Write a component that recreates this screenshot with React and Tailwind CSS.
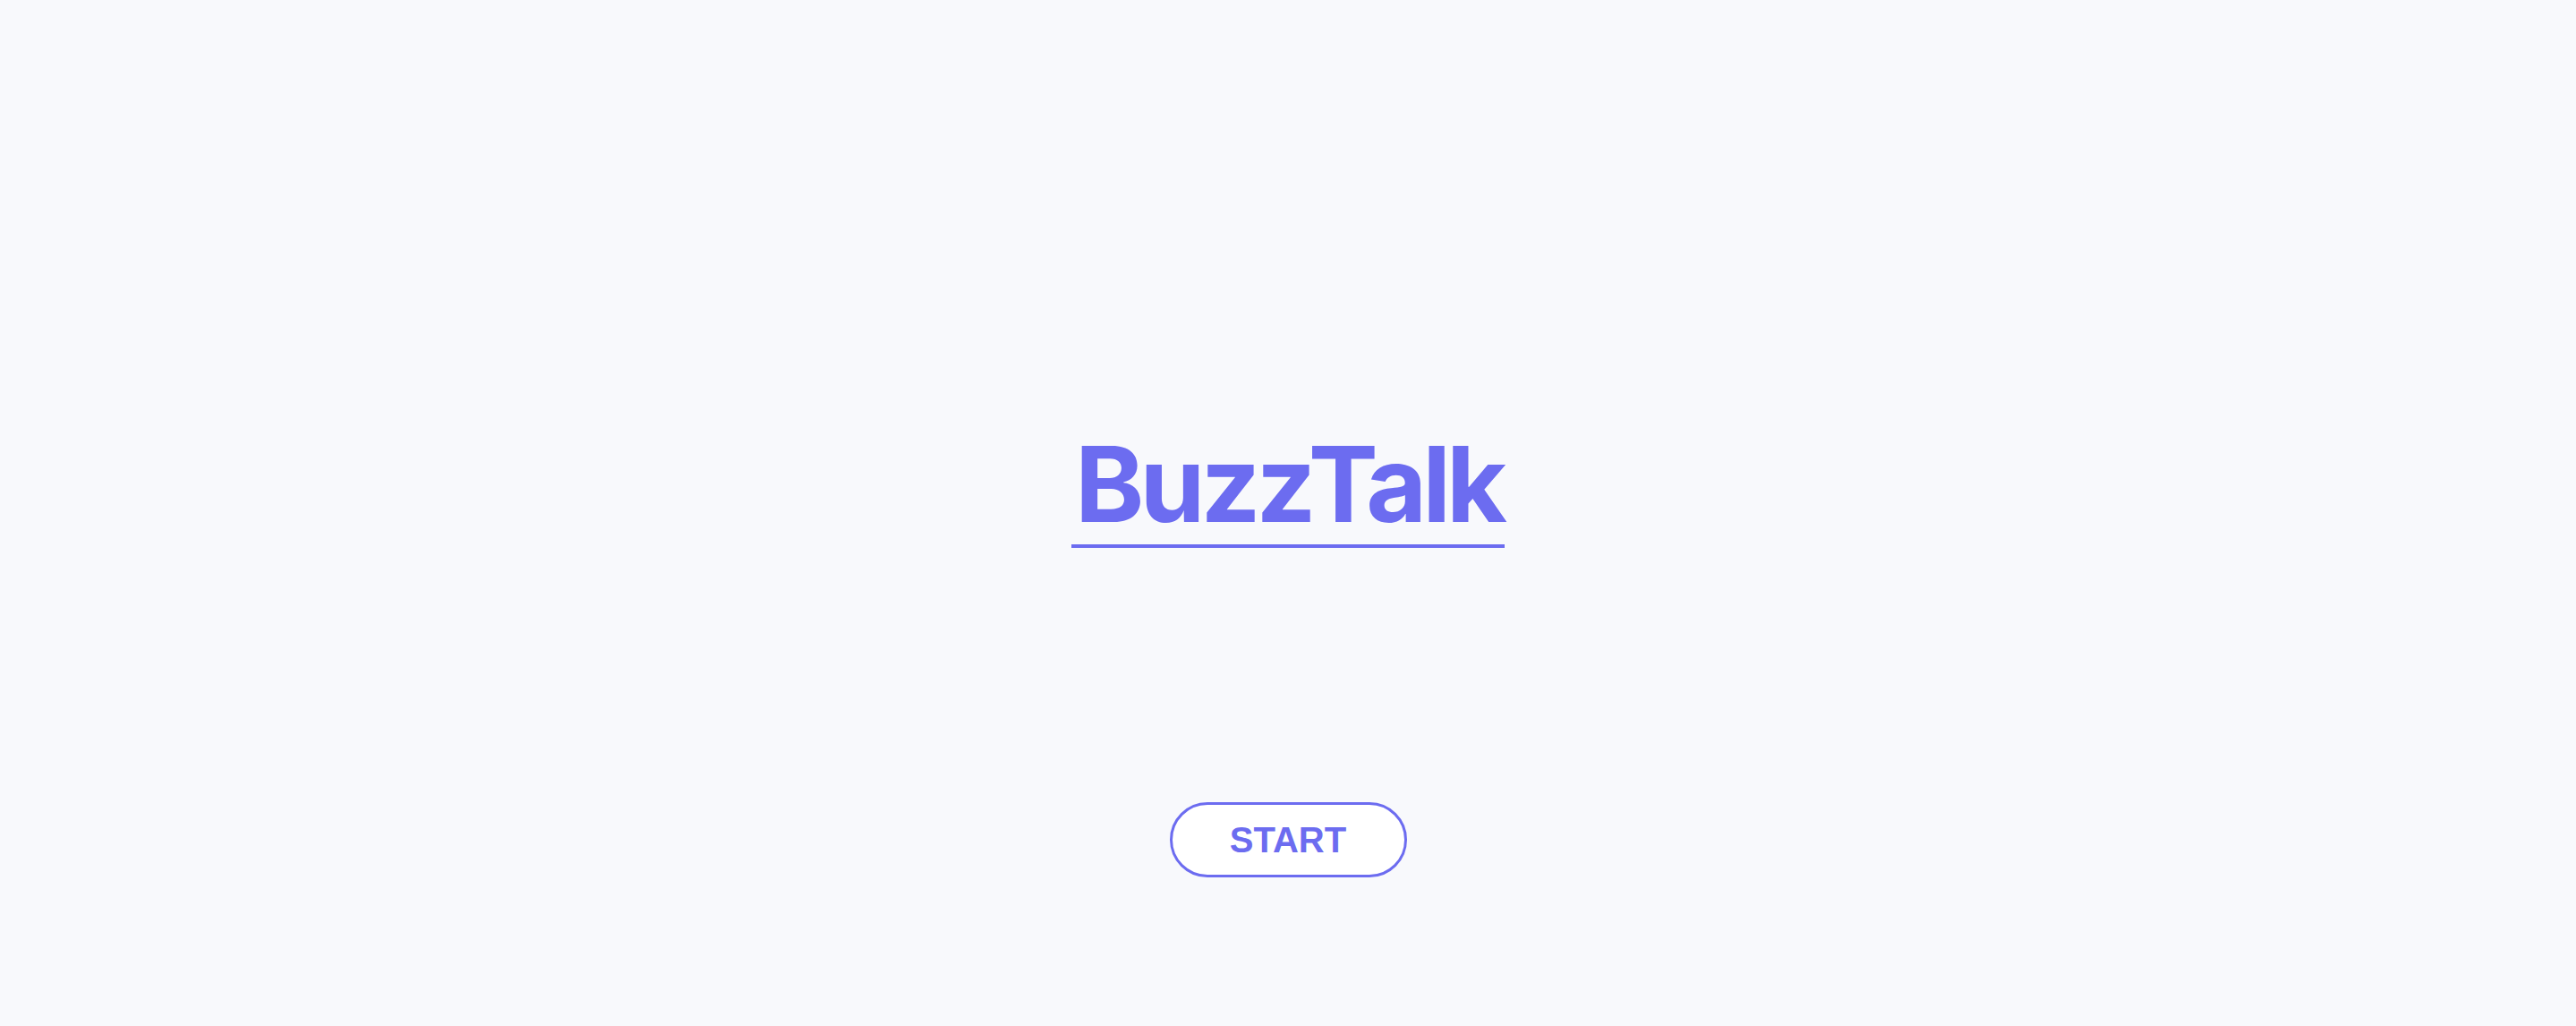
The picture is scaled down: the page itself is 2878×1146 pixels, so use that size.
export default function App() {
  return (
    <div className="min-h-screen w-full bg-[#f8f9fc] flex flex-col items-center pt-[482px]">
      <h1 className="font-['Inter',sans-serif] font-bold text-[117px] leading-none tracking-[-0.042em] text-[#6c6cf0] border-b-4 border-[#6c6cf0] pb-[9px] pl-[4px] pr-[2px]">
        BuzzTalk
      </h1>
      <button className="mt-[284px] w-[265px] h-[84px] rounded-full border-[3px] border-[#6c6cf0] bg-white text-[#6c6cf0] font-['Liberation_Sans',Arial,sans-serif] font-bold text-[40px] leading-none">
        START
      </button>
    </div>
  );
}
